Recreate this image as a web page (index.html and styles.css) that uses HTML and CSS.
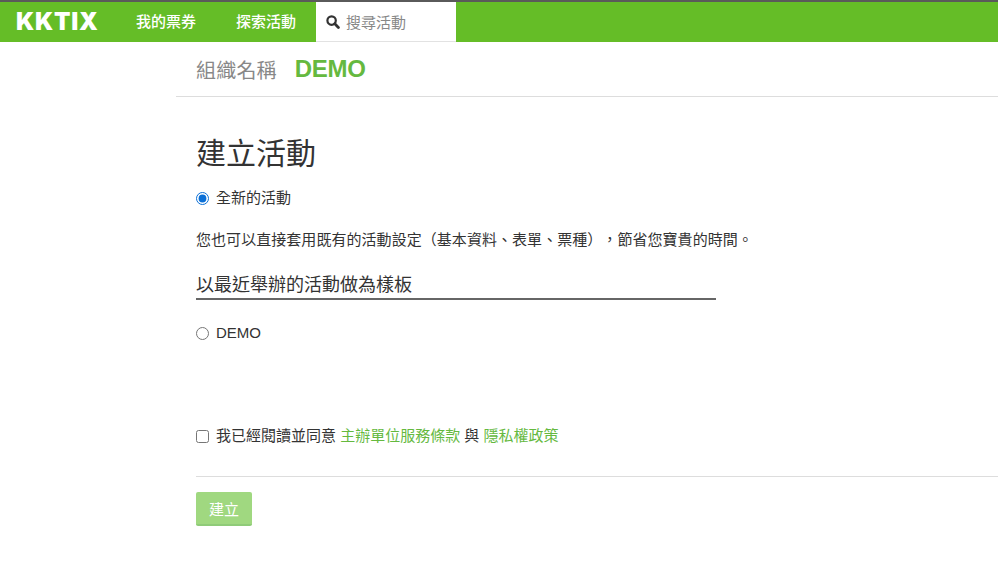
FILE: index.html
```html
<!DOCTYPE html>
<html lang="zh-Hant">
<head>
<meta charset="utf-8">
<title>建立活動</title>
<link rel="stylesheet" href="styles.css">
</head>
<body>
<nav class="nav">
  <a class="logo">KKTIX</a>
  <a class="nav-link first">我的票券</a>
  <a class="nav-link">探索活動</a>
  <div class="search">
    <svg class="search-icon" width="14" height="14" viewBox="0 0 14 14"><circle cx="5.6" cy="5.6" r="4.2" fill="none" stroke="#333" stroke-width="2.2"/><path d="M8.8 8.8 L12.4 12.4" stroke="#333" stroke-width="2.8" stroke-linecap="round"/></svg>
    <span class="search-text">搜尋活動</span>
  </div>
</nav>
<main class="main">
  <header class="org">
    <span class="org-label">組織名稱</span>
    <span class="org-name">DEMO</span>
  </header>
  <section class="content">
    <h1 class="title">建立活動</h1>
    <label class="option first-option"><input type="radio" name="t" checked><span>全新的活動</span></label>
    <p class="hint">您也可以直接套用既有的活動設定（基本資料、表單、票種），節省您寶貴的時間。</p>
    <h2 class="sub">以最近舉辦的活動做為樣板</h2>
    <label class="option demo"><input type="radio" name="t"><span>DEMO</span></label>
    <label class="option agree"><input type="checkbox"><span>我已經閱讀並同意 <a class="link">主辦單位服務條款</a> 與 <a class="link">隱私權政策</a></span></label>
    <div class="actions"><button class="btn" type="button">建立</button></div>
  </section>
</main>
</body>
</html>
```
FILE: styles.css
```css
* { box-sizing: border-box; }
html, body { margin: 0; padding: 0; }
body {
  background: #fff;
  color: #333;
  font-family: "Liberation Sans", "Noto Sans CJK TC", sans-serif;
  font-size: 15px;
  text-spacing-trim: space-all;
  overflow: hidden;
}
.nav {
  display: flex;
  align-items: center;
  height: 42px;
  background: #65bd27;
  border-top: 2px solid #5a5a5a;
}
.logo {
  width: 136px;
  padding-left: 16px;
  color: #fff;
  font-family: "Inter", sans-serif;
  font-weight: 900;
  font-size: 24px;
  line-height: 38px;
  letter-spacing: 0.8px;
}
.nav-link {
  color: #fff;
  font-size: 15px;
  font-weight: 500;
  line-height: 38px;
  padding-bottom: 1px;
  margin-right: 40px;
}
.search {
  display: flex;
  align-items: center;
  gap: 6px;
  width: 140px;
  height: 40px;
  margin-left: -20px;
  padding-left: 10px;
  background: #fff;
  border-bottom: 1px solid #e2e2e2;
}
.search-text { color: #888; font-size: 15px; }
.main { margin-left: 176px; }
.org {
  display: flex;
  align-items: center;
  gap: 18px;
  height: 55px;
  padding-left: 20px;
  border-bottom: 1px solid #ddd;
}
.org-label { color: #888; font-size: 20px; letter-spacing: 0.2px; }
.org-name { color: #65b93f; font-size: 24px; font-weight: 700; letter-spacing: -0.3px; }
.content { padding: 0 0 0 20px; }
.title {
  margin: 37px 0 0;
  font-size: 30px;
  line-height: 40px;
  font-weight: 400;
  color: #333;
}
.option {
  display: flex;
  align-items: center;
  gap: 7px;
  line-height: 20px;
}
.option input { margin: 0; width: 13px; height: 13px; accent-color: #0b6fd6; }
.first-option { margin-top: 14px; }
.hint { margin: 22px 0 0; font-size: 15px; line-height: 20px; letter-spacing: 0.05px; }
.sub {
  width: 520px;
  margin: 23px 0 0;
  font-size: 18px;
  line-height: 25px;
  font-weight: 400;
  border-bottom: 2px solid #666;
}
.demo { margin-top: 23px; }
.agree { margin-top: 83px; }
.link { color: #65b93f; }
.actions {
  margin-top: 30px;
  padding-top: 15px;
  border-top: 1px solid #ddd;
}
.btn {
  display: block;
  width: 56px;
  height: 34px;
  padding: 0;
  border: 0;
  border-bottom: 2px solid #8fcb78;
  border-radius: 2px;
  background: #a0d880;
  color: #fff;
  font-family: inherit;
  font-size: 15px;
}
```
